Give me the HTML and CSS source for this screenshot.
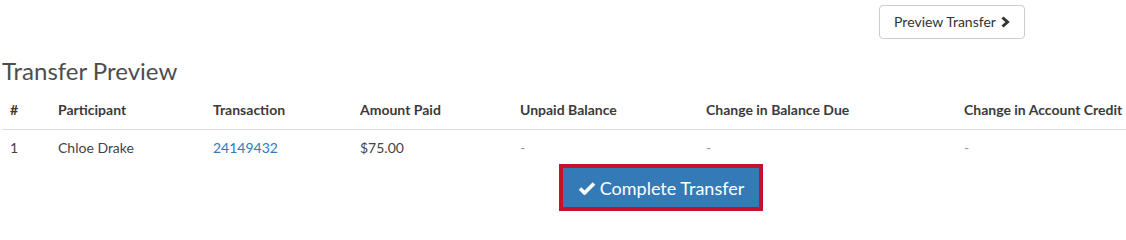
FILE: index.html
```html
<!DOCTYPE html>
<html>
<head>
<meta charset="utf-8">
<link rel="stylesheet" href="styles.css">
</head>
<body>
<div class="page">
  <div class="toolbar">
    <button class="btn btn-default">Preview Transfer <svg class="chev" viewBox="0 0 10 12" width="10" height="12"><path d="M2.5 1.5 L7.5 6 L2.5 10.5" fill="none" stroke="#333" stroke-width="3"/></svg></button>
  </div>
  <h3 class="title">Transfer Preview</h3>
  <table class="tbl">
    <colgroup>
      <col class="c1"><col class="c2"><col class="c3"><col class="c4"><col class="c5"><col class="c6"><col class="c7">
    </colgroup>
    <thead>
      <tr><th>#</th><th>Participant</th><th>Transaction</th><th>Amount Paid</th><th>Unpaid Balance</th><th>Change in Balance Due</th><th>Change in Account Credit</th></tr>
    </thead>
    <tbody>
      <tr><td>1</td><td>Chloe Drake</td><td><a href="#" class="link">24149432</a></td><td>$75.00</td><td class="dash">-</td><td class="dash">-</td><td class="dash">-</td></tr>
    </tbody>
  </table>
  <div class="actions">
    <button class="btn-complete"><svg class="check" viewBox="0 0 18 14" width="18" height="14"><path d="M2 7.5 L6.5 12 L16 2.5" fill="none" stroke="#fff" stroke-width="3.6" stroke-linejoin="miter"/></svg>Complete Transfer</button>
  </div>
</div>
</body>
</html>
```

FILE: styles.css
```css
html, body {
  margin: 0;
  padding: 0;
  background: #fff;
}
body {
  font-family: Lato, "Open Sans", sans-serif;
  font-size: 14px;
  color: #444;
}
.page {
  padding: 5px 0 0 2px;
}
.toolbar {
  display: flex;
  justify-content: flex-end;
  padding-right: 101px;
}
.btn {
  font-family: Lato, sans-serif;
  font-size: 14px;
  line-height: 20px;
  padding: 6px 12px;
  border-radius: 4px;
  cursor: pointer;
  display: inline-flex;
  align-items: center;
  gap: 4px;
}
.btn-default {
  background: #fff;
  border: 1px solid #ccc;
  color: #333;
  width: 146px;
  justify-content: center;
}
.chev {
  display: block;
  margin-top: -1px;
}
.title {
  font-size: 24px;
  font-weight: 400;
  line-height: 26.4px;
  margin: 19px 0 8px 0;
  color: #4d4d4d;
}
.tbl {
  width: 1124px;
  border-collapse: collapse;
  table-layout: fixed;
}
.c1 { width: 48px; }
.c2 { width: 155px; }
.c3 { width: 147px; }
.c4 { width: 160px; }
.c5 { width: 186px; }
.c6 { width: 258px; }
.c7 { width: 170px; }
.tbl th {
  text-align: left;
  font-weight: 700;
  color: #3a3a3a;
  padding: 8px 8px 9px 8px;
  line-height: 20px;
  border-bottom: 1px solid #ddd;
  white-space: nowrap;
}
.tbl td {
  padding: 8px 8px 6px 8px;
  line-height: 20px;
  color: #444;
  white-space: nowrap;
}
.link {
  color: #337ab7;
  text-decoration: none;
}
.tbl td.dash {
  color: #999;
}
.actions {
  display: flex;
  padding-left: 557px;
}
.btn-complete {
  display: inline-flex;
  align-items: center;
  gap: 4px;
  height: 47px;
  width: 204px;
  padding: 0 14px;
  border: 4px solid #c8102e;
  background: #337ab7;
  color: #fff;
  font-family: Lato, sans-serif;
  font-size: 18px;
  cursor: pointer;
  justify-content: center;
}
.check {
  display: block;
}
```
